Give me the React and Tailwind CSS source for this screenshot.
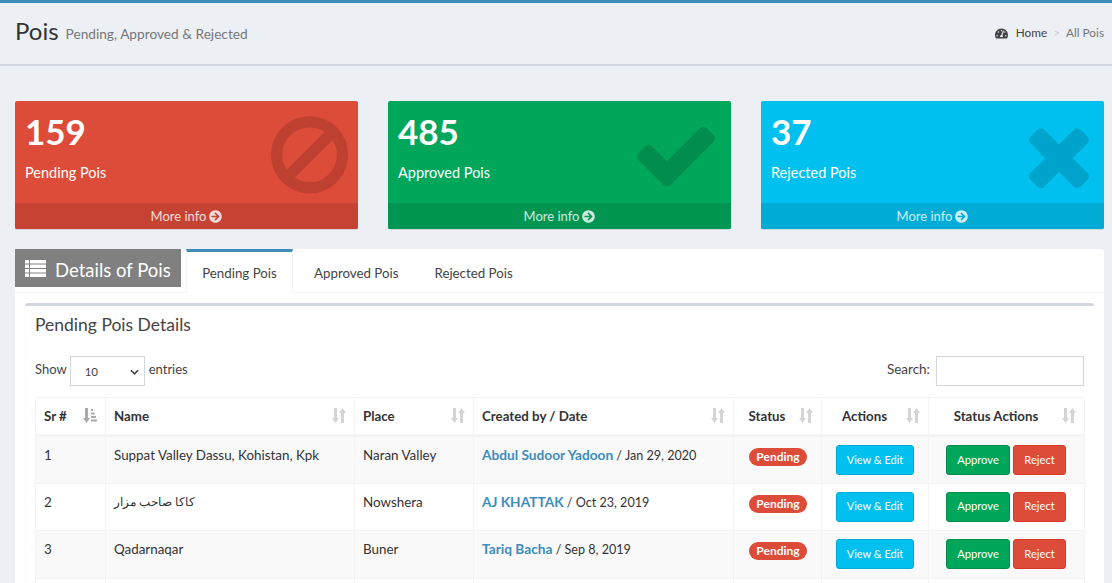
import { FaArrowCircleRight, FaTachometerAlt } from 'react-icons/fa';

const banPath = 'M1312 893q0-161-87-295l-754 753q137 89 297 89 111 0 211.500-43.500t173.500-116.500 116-174.500 43-212.500zm-999 299l755-754q-135-91-300-91-148 0-273 73t-198 199-73 274q0 162 89 299zm1223-299q0 157-61 300t-163.500 246-245 164-298.500 61-298.500-61-245-164-163.500-246-61-300 61-299.500 163.500-245.500 245-164 298.500-61 298.500 61 245 164 163.500 245.500 61 299.500z';
const checkPath = 'M1671 566q0 40-28 68l-724 724-136 136q-28 28-68 28t-68-28l-136-136-362-362q-28-28-28-68t28-68l136-136q28-28 68-28t68 28l294 295 656-657q28-28 68-28t68 28l136 136q28 28 28 68z';
const timesPath = 'M1490 1322q0 40-28 68l-136 136q-28 28-68 28t-68-28l-294-294-294 294q-28 28-68 28t-68-28l-136-136q-28-28-28-68t28-68l294-294-294-294q-28-28-28-68t28-68l136-136q28-28 68-28t68 28l294 294 294-294q28-28 68-28t68 28l136 136q28 28 28 68t-28 68l-294 294 294 294q28 28 28 68z';

const stats = [
  { count: '159', label: 'Pending Pois', bg: 'bg-[#dd4b39]', foot: 'bg-[#c64333]', path: banPath, iconClass: 'text-[#bd4030] left-[256px] top-[9px] w-[90px] h-[90px]' },
  { count: '485', label: 'Approved Pois', bg: 'bg-[#00a65a]', foot: 'bg-[#009551]', path: checkPath, iconClass: 'text-[#008d4d] left-[243px] top-[9px] w-[90px] h-[90px]' },
  { count: '37', label: 'Rejected Pois', bg: 'bg-[#00c0ef]', foot: 'bg-[#00acd6]', path: timesPath, iconClass: 'text-[#00a3cb] left-[253px] top-[9px] w-[90px] h-[90px]' },
];

const rows = [
  { sr: 1, name: 'Suppat Valley Dassu, Kohistan, Kpk', place: 'Naran Valley', by: 'Abdul Sudoor Yadoon', date: 'Jan 29, 2020' },
  { sr: 2, name: 'کاکا صاحب مزار', urdu: true, place: 'Nowshera', by: 'AJ KHATTAK', date: 'Oct 23, 2019' },
  { sr: 3, name: 'Qadarnaqar', place: 'Buner', by: 'Tariq Bacha', date: 'Sep 8, 2019' },
];

function SortIcon() {
  return (
    <svg viewBox="0 0 14 15" className="absolute right-[8px] top-[10px] w-[14px] h-[15px] text-[#d4d4d4]" fill="currentColor">
      <path d="M2 0h3v10h2l-3.500 5L0 10h2z" />
      <path d="M9 15h3V5h2L10.500 0 7 5h2z" />
    </svg>
  );
}

function Th({ children, center, width }) {
  return (
    <th className={`relative border border-[#f4f4f4] border-b-[3px] h-[38px] px-2 pt-[2px] font-bold text-[13.300px] text-[#333] ${center ? 'text-center pr-[29px]' : 'text-left'} ${width}`}>
      {children}
      <SortIcon />
    </th>
  );
}

function Td({ children, size = 'text-[13.400px]' }) {
  return <td className={`border border-[#f4f4f4] px-2 pt-[8px] align-top leading-[20px] text-[#333] ${size}`}>{children}</td>;
}

function Btn({ color, width, text = 'text-[11.200px]', children }) {
  return <button className={`h-[30px] rounded-[3px] border text-white ${text} ${color} ${width}`}>{children}</button>;
}

export default function App() {
  return (
    <div className="h-[583px] overflow-hidden bg-[#ecf0f5] border-t-[3px] border-[#3c8dbc] font-['Lato','Noto_Sans',sans-serif] text-[#333]">
      <div className="flex items-center justify-between h-[63px] pl-[15px] pr-[8px] border-b-2 border-[#d2d6de]">
        <div className="flex items-baseline gap-[7px] -mt-[6px]">
          <h1 className="text-[24px] leading-[30px] text-[#333]">Pois</h1>
          <span className="-translate-y-px text-[13.700px] text-[#777]">Pending, Approved &amp; Rejected</span>
        </div>
        <div className="flex items-center text-[11.800px] -mt-[1px]">
          <FaTachometerAlt className="w-[13px] h-[13px] text-[#444] mr-[8px]" />
          <span className="text-[#444]">Home</span>
          <span className="text-[#ccc] mx-[6px]">&gt;</span>
          <span className="text-[#777]">All Pois</span>
        </div>
      </div>

      <div className="grid grid-cols-3 gap-x-[30px] w-[1089px] ml-[15px] mt-[35px]">
        {stats.map(({ count, label, bg, foot, path, iconClass }) => (
          <div key={label} className={`relative h-[128px] overflow-hidden rounded-[2px] shadow-[0_1px_1px_rgba(0,0,0,0.1)] ${bg}`}>
            <div className="h-[102px] pl-[10px] pt-[8px] text-white">
              <div className="text-[35px] leading-[44px] font-bold">{count}</div>
              <div className="mt-[10px] text-[14.500px] leading-[20px]">{label}</div>
            </div>
            <svg viewBox="0 0 1792 1792" fill="currentColor" className={`absolute ${iconClass}`}>
              <path d={path} />
            </svg>
            <div className={`flex h-[26px] items-center justify-center gap-[3px] pt-[1px] text-[13px] text-white/80 ${foot}`}>
              More info <FaArrowCircleRight className="w-[13px] h-[13px]" />
            </div>
          </div>
        ))}
      </div>

      <div className="w-[1089px] ml-[15px] mt-[20px] bg-white rounded-[3px] h-[400px]">
        <div className="flex h-[44px] border-b border-[#f4f4f4]">
          <div className="flex items-center gap-[9px] w-[166px] h-[38px] pl-[10px] bg-[#808080] text-white text-[18.500px]">
            <svg viewBox="0 0 21 17" className="w-[21px] h-[17px]" fill="currentColor">
              <path d="M0 0h4v3.500H0zM5 0h16v3.500H5zM0 4.500h4V8H0zM5 4.500h16V8H5zM0 9h4v3.500H0zM5 9h16v3.500H5zM0 13.500h4V17H0zM5 13.500h16V17H5z" />
            </svg>
            <span className="pt-[6px]">Details of Pois</span>
          </div>
          <div className="flex items-center justify-center w-[107px] h-[44px] ml-[5px] pt-[3px] bg-white border-t-[3px] border-x border-t-[#3c8dbc] border-x-[#f4f4f4] text-[13.300px] text-[#444]">
            Pending Pois
          </div>
          <div className="flex items-center pt-[6px] ml-[21px] text-[13.300px] text-[#444]">Approved Pois</div>
          <div className="flex items-center pt-[6px] ml-[36px] text-[13.300px] text-[#444]">Rejected Pois</div>
        </div>

        <div className="mx-[10px] mt-[10px] border-t-[3px] border-[#d2d6de] rounded-t-[3px] px-[10px] shadow-[0_1px_1px_rgba(0,0,0,0.1)] h-[300px]">
          <h3 className="pt-[8px] text-[17.500px] leading-[22px] text-[#444]">Pending Pois Details</h3>

          <div className="flex items-center justify-between mt-[20px] h-[30px] text-[13px] text-[#444]">
            <div className="flex items-center">
              <span className="pb-[3px] mr-[3px]">Show</span>
              <div className="relative flex items-center w-[75px] h-[30px] pl-[14px] pt-[2px] border border-[#d2d6de] text-[11.500px]">
                10
                <svg viewBox="0 0 10 6" className="absolute right-[5px] top-[12px] w-[9px] h-[6px]" fill="none" stroke="#444" strokeWidth="1.800">
                  <path d="M1 1l4 4 4-4" />
                </svg>
              </div>
              <span className="pb-[3px] ml-[4px]">entries</span>
            </div>
            <div className="flex items-center gap-[6px]">
              <span className="pb-[3px] text-[13.500px]">Search:</span>
              <div className="w-[148px] h-[30px] border border-[#d2d6de]" />
            </div>
          </div>

          <table className="w-[1049px] mt-[11px] table-fixed border-collapse">
            <thead>
              <tr>
                <th className="relative w-[70px] h-[38px] px-2 pt-[2px] border border-[#f4f4f4] border-b-[3px] text-left text-[13.300px] font-bold text-[#333]">
                  Sr #
                  <svg viewBox="0 0 14 15" className="absolute right-[8px] top-[10px] w-[14px] h-[15px] text-[#aaa]" fill="currentColor">
                    <path d="M2 0h3v10h2l-3.500 5L0 10h2z" />
                    <path d="M8 1h2v2H8zM8 4.500h3.500v2H8zM8 8h5v2H8zM8 11.500h6v2H8z" />
                  </svg>
                </th>
                <Th width="w-[249px]">Name</Th>
                <Th width="w-[119px]">Place</Th>
                <Th width="w-[260px]">Created by / Date</Th>
                <Th width="w-[88px]" center>Status</Th>
                <Th width="w-[107px]" center>Actions</Th>
                <Th width="w-[156px]" center>Status Actions</Th>
              </tr>
            </thead>
            <tbody>
              {rows.map((row) => (
                <tr key={row.sr} className={`h-[47.500px] ${row.sr % 2 ? 'bg-[#f9f9f9]' : 'bg-white'}`}>
                  <Td>{row.sr}</Td>
                  <Td size={row.urdu ? 'text-[11.500px]' : undefined}>{row.name}</Td>
                  <Td>{row.place}</Td>
                  <Td>
                    <span className="font-bold text-[13.700px] text-[#3c8dbc]">{row.by}</span>
                    <span className="text-[12.600px]"> / {row.date}</span>
                  </Td>
                  <td className="border border-[#f4f4f4] pl-[15px] pt-[11px] align-top text-[14px]">
                    <span className="flex items-center justify-center h-[18px] w-[58px] rounded-[9px] bg-[#dd4b39] text-white text-[12px] font-bold">Pending</span>
                  </td>
                  <td className="border border-[#f4f4f4] align-top pt-[8px] text-center">
                    <Btn color="bg-[#00c0ef] border-[#00acd6]" width="w-[78px]" text="text-[11px]">View &amp; Edit</Btn>
                  </td>
                  <td className="border border-[#f4f4f4] align-top pt-[8px] pl-[17px]">
                    <div className="flex gap-[3px]">
                      <Btn color="bg-[#00a65a] border-[#008d4c]" width="w-[64px]">Approve</Btn>
                      <Btn color="bg-[#dd4b39] border-[#d73925]" width="w-[53px]">Reject</Btn>
                    </div>
                  </td>
                </tr>
              ))}
              <tr className="h-[47.500px] bg-white">
                <td className="border border-[#f4f4f4]" />
                <td className="border border-[#f4f4f4]" />
                <td className="border border-[#f4f4f4]" />
                <td className="border border-[#f4f4f4]" />
                <td className="border border-[#f4f4f4]" />
                <td className="border border-[#f4f4f4]" />
                <td className="border border-[#f4f4f4]" />
              </tr>
            </tbody>
          </table>
        </div>
      </div>
    </div>
  );
}
